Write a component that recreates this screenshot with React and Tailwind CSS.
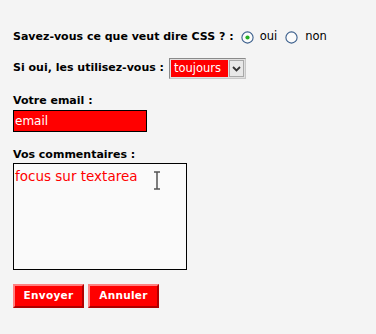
import React from "react";

const font = { fontFamily: '"DejaVu Sans", Verdana, sans-serif' };

function Radio({ checked }) {
  return (
    <svg width="13" height="13" viewBox="0 0 13 13" className="shrink-0">
      <circle cx="6.5" cy="6.5" r="5.6" fill="#fbfbfb" stroke="#3b5f8c" strokeWidth="1.1" />
      {checked && <circle cx="6.5" cy="6.5" r="2.1" fill="#22b022" />}
    </svg>
  );
}

export default function App() {
  return (
    <div className="w-[376px] h-[334px] bg-[#f4f4f4] text-black pl-[13px] pt-[27px]" style={font}>
      <div className="flex items-center h-[20px] text-[11px] font-bold">
        <span>Savez-vous ce que veut dire CSS ? :</span>
        <span className="ml-[7px]"><Radio checked /></span>
        <span className="ml-[6px] font-normal text-[11.5px]">oui</span>
        <span className="ml-[8px]"><Radio /></span>
        <span className="ml-[7px] font-normal text-[11.5px]">non</span>
      </div>
      <div className="flex items-center h-[21px] mt-[11px] text-[11px] font-bold">
        <span>Si oui, les utilisez-vous :</span>
        <div className="ml-[5px] flex items-center h-[21px] border border-[#8a8a8a] border-r-[#c8c8c8] border-b-[#c8c8c8] bg-[#e0e0e0] p-[1px]">
          <div className="h-full w-[57px] bg-[#ff0000] text-white font-normal text-[11.5px] leading-[17px] pl-[3px]">toujours</div>
          <div className="ml-[1px] h-full w-[15px] bg-[#e8e8e8] border border-[#a8a8a8] flex items-center justify-center">
            <svg width="9" height="6" viewBox="0 0 9 6">
              <path d="M1 1 L4.5 4.5 L8 1" fill="none" stroke="#333" strokeWidth="1.8" />
            </svg>
          </div>
        </div>
      </div>
      <div className="mt-[14px] h-[16px] leading-[16px] text-[11px] font-bold">Votre email :</div>
      <div className="mt-[1px] w-[134px] h-[22px] border border-black bg-[#ff0000] text-white text-[12px] leading-[20px] pl-[1px]">email</div>
      <div className="mt-[15px] h-[16px] leading-[16px] text-[11px] font-bold">Vos commentaires :</div>
      <div className="relative w-[174px] h-[107px] border border-black bg-[#fafafa] text-[#ff0000] text-[13.5px] leading-[20px] pt-[2px] pl-[1px]">
        focus sur textarea
        <svg className="absolute left-[139px] top-[7px]" width="8" height="19" viewBox="0 0 8 19">
          <path d="M1 1 H7 M4 1.5 V17.5 M1 18 H7" fill="none" stroke="#000" strokeWidth="1" />
        </svg>
      </div>
      <div className="mt-[14px] flex gap-[4px]">
        <button className="w-[71px] h-[24px] bg-[#ff0000] text-white font-bold text-[10.5px] border-2 border-t-[#ff8080] border-l-[#ff8080] border-r-[#b00000] border-b-[#b00000] tracking-[0.3px]">Envoyer</button>
        <button className="w-[71px] h-[24px] bg-[#ff0000] text-white font-bold text-[10.5px] border-2 border-t-[#ff8080] border-l-[#ff8080] border-r-[#b00000] border-b-[#b00000] tracking-[0.3px]">Annuler</button>
      </div>
    </div>
  );
}
